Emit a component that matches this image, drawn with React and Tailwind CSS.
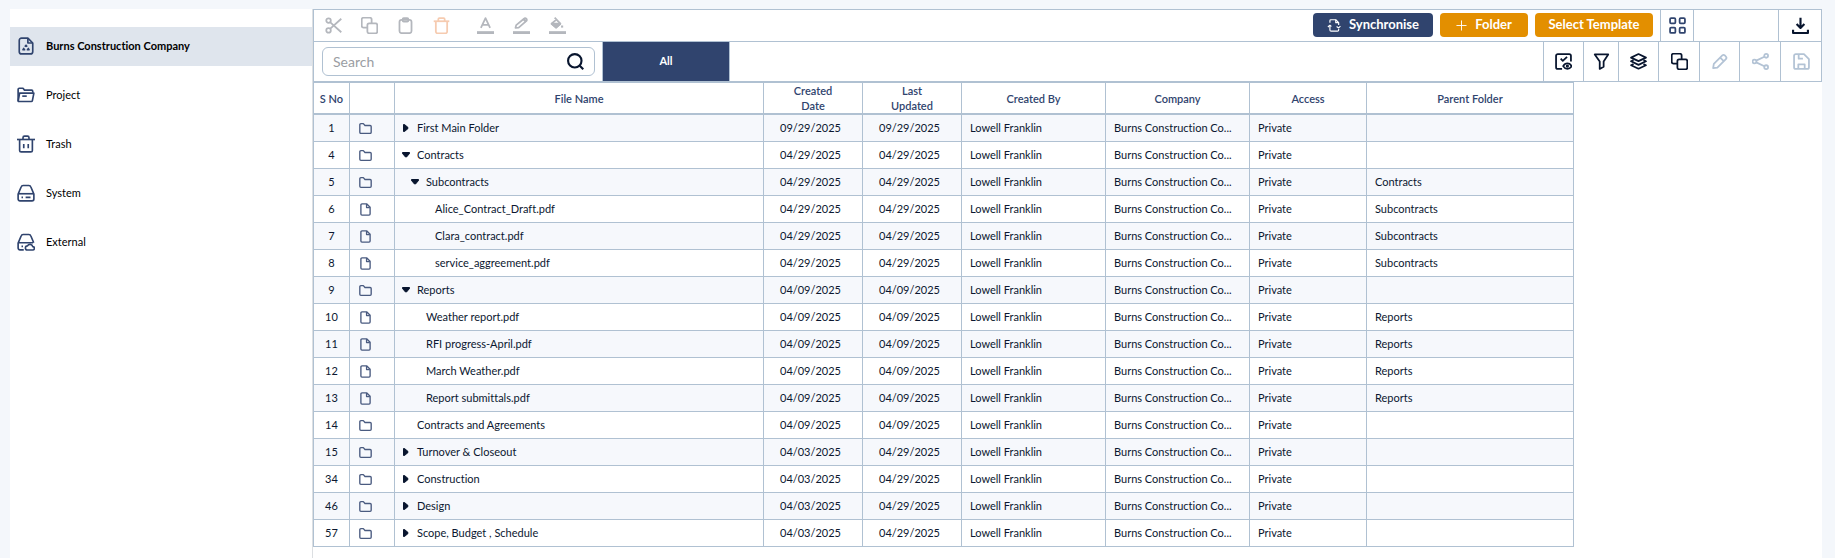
import { useState } from "react";

const rows = [
  { no: 1, type: "folder", name: "First Main Folder", level: 0, toggle: "closed", created: "09/29/2025", updated: "09/29/2025", parent: "" },
  { no: 4, type: "folder", name: "Contracts", level: 0, toggle: "open", created: "04/29/2025", updated: "04/29/2025", parent: "" },
  { no: 5, type: "folder", name: "Subcontracts", level: 1, toggle: "open", created: "04/29/2025", updated: "04/29/2025", parent: "Contracts" },
  { no: 6, type: "file", name: "Alice_Contract_Draft.pdf", level: 2, created: "04/29/2025", updated: "04/29/2025", parent: "Subcontracts" },
  { no: 7, type: "file", name: "Clara_contract.pdf", level: 2, created: "04/29/2025", updated: "04/29/2025", parent: "Subcontracts" },
  { no: 8, type: "file", name: "service_aggreement.pdf", level: 2, created: "04/29/2025", updated: "04/29/2025", parent: "Subcontracts" },
  { no: 9, type: "folder", name: "Reports", level: 0, toggle: "open", created: "04/09/2025", updated: "04/09/2025", parent: "" },
  { no: 10, type: "file", name: "Weather report.pdf", level: 1, created: "04/09/2025", updated: "04/09/2025", parent: "Reports" },
  { no: 11, type: "file", name: "RFI progress-April.pdf", level: 1, created: "04/09/2025", updated: "04/09/2025", parent: "Reports" },
  { no: 12, type: "file", name: "March Weather.pdf", level: 1, created: "04/09/2025", updated: "04/09/2025", parent: "Reports" },
  { no: 13, type: "file", name: "Report submittals.pdf", level: 1, created: "04/09/2025", updated: "04/09/2025", parent: "Reports" },
  { no: 14, type: "folder", name: "Contracts and Agreements", level: 0, created: "04/09/2025", updated: "04/09/2025", parent: "" },
  { no: 15, type: "folder", name: "Turnover & Closeout", level: 0, toggle: "closed", created: "04/03/2025", updated: "04/29/2025", parent: "" },
  { no: 34, type: "folder", name: "Construction", level: 0, toggle: "closed", created: "04/03/2025", updated: "04/29/2025", parent: "" },
  { no: 46, type: "folder", name: "Design", level: 0, toggle: "closed", created: "04/03/2025", updated: "04/29/2025", parent: "" },
  { no: 57, type: "folder", name: "Scope, Budget , Schedule", level: 0, toggle: "closed", created: "04/03/2025", updated: "04/29/2025", parent: "" },
];

const indents = ["pl-0", "pl-[9px]", "pl-[18px]"];

const paths = {
  company: (
    <>
      <path d="M14.500 1.500H6A3 3 0 0 0 3 4.500v15a3 3 0 0 0 3 3h12a3 3 0 0 0 3-3V8z" />
      <path d="M14.500 2v6H21" />
      <path d="M10.500 13l1.500-2 1.500 2M9.500 14.500L8 17h3M14.500 14.500L16 17h-3" />
    </>
  ),
  project: (
    <>
      <path d="M1.500 20V4.500a1.500 1.500 0 0 1 1.500-1.500h5l2 2.500h9.500A1.500 1.500 0 0 1 21 7v2" />
      <path d="M1.500 20.500L3.500 9.500h19l-2 10a1.500 1.500 0 0 1-1.500 1.200z" />
      <path d="M7 13.500h6" />
    </>
  ),
  trash: (
    <>
      <path d="M0 6h24" />
      <path d="M3.500 6v14.500a2 2 0 0 0 2 2h13a2 2 0 0 0 2-2V6" />
      <path d="M8 6V3.500A2 2 0 0 1 10 1.500h4a2 2 0 0 1 2 2V6" />
      <path d="M9 12v5.500M15 12v5.500" />
    </>
  ),
  system: (
    <>
      <path d="M1.500 13.500L5.500 4a3 3 0 0 1 2.700-2h7.600a3 3 0 0 1 2.700 2l4 9.500V20a2.500 2.500 0 0 1-2.500 2.500H4A2.500 2.500 0 0 1 1.500 20z" />
      <path d="M1.500 13h21" />
      <path d="M6 17.800h2M11.500 17.800h6.500" />
    </>
  ),
  external: (
    <>
      <path d="M9 22.500H4A2.500 2.500 0 0 1 1.500 20v-6.500L5.500 4a3 3 0 0 1 2.700-2h7.600a3 3 0 0 1 2.700 2l3.800 9" />
      <path d="M1.500 13h20M6 17.800h2" />
      <path d="M14 22.700a2.800 2.800 0 0 1 0-5.600 3.800 3.800 0 0 1 7 1 2.300 2.300 0 0 1-.2 4.600z" />
    </>
  ),
  cut: (
    <>
      <circle cx="5" cy="5" r="3.200" />
      <circle cx="5" cy="19" r="3.200" />
      <path d="M7.500 7.500L23 21.500M23 2.500L7.500 16.500" />
    </>
  ),
  copy: (
    <>
      <rect x="9" y="9" width="14" height="14" rx="2.500" />
      <path d="M9 15H3.500A2.500 2.500 0 0 1 1 12.500v-9A2.500 2.500 0 0 1 3.500 1h9A2.500 2.500 0 0 1 15 3.500V9" />
    </>
  ),
  paste: (
    <>
      <rect x="3.500" y="4" width="17" height="18.800" rx="3" />
      <rect x="8" y="1.500" width="8" height="5" rx="1.500" />
    </>
  ),
  bin: (
    <>
      <path d="M1 6h22" />
      <path d="M4 6v14.500A2.500 2.500 0 0 0 6.500 23h11a2.500 2.500 0 0 0 2.500-2.500V6" />
      <path d="M7.500 6V3A1.500 1.500 0 0 1 9 1.500h6A1.500 1.500 0 0 1 16.500 3v3" />
    </>
  ),
  textColor: (
    <>
      <path d="M5.500 15.500L12 1.500l6.500 14M8 11h8" />
      <path d="M0 22h24" strokeWidth="4" />
    </>
  ),
  lineColor: (
    <>
      <path d="M3.500 15.500l1-4L15.500 2.500a2.300 2.300 0 0 1 3.500 3L8 15z" />
      <path d="M15 3l3.500 3.500" strokeWidth="3.500" />
      <path d="M0 22h24" strokeWidth="4" />
    </>
  ),
  fillColor: (
    <>
      <path d="M8 1l8 8.500-6 5.500L3.500 9.500 10 4" />
      <path d="M4 9.500h12l-6 5.500z" fill="currentColor" />
      <path d="M18.500 12v3" strokeWidth="3" />
      <path d="M0 22h24" strokeWidth="4" />
    </>
  ),
  sync: (
    <>
      <path d="M5 8V4.500A1.500 1.500 0 0 1 6.500 3H15l5 5v4" />
      <path d="M15 3v5h5" />
      <path d="M20 19v1.500a2 2 0 0 1-2 2H7a2 2 0 0 1-2-2V14" />
      <path d="M1.500 15.500L5 12.500l2.500 2M16.500 14.500l3.500 2.500 3-3" />
    </>
  ),
  plus: <path d="M12 1v22M1 12h22" />,
  grid: (
    <>
      <rect x="1.500" y="1.500" width="7.500" height="7.500" rx="1.500" />
      <rect x="15" y="1.500" width="7.500" height="7.500" rx="1.500" />
      <rect x="1.500" y="15" width="7.500" height="7.500" rx="1.500" />
      <rect x="15" y="15" width="7.500" height="7.500" rx="1.500" />
    </>
  ),
  download: <path d="M12 1v14M6.500 10l5.500 5.500 5.500-5.500M1.500 18v4.500h21V18" />,
  search: (
    <>
      <circle cx="11" cy="11" r="9.500" />
      <path d="M18 18l5 5" />
    </>
  ),
  review: (
    <>
      <path d="M10 22.500H4A2.500 2.500 0 0 1 1.500 20V4A2.500 2.500 0 0 1 4 1.500h16A2.500 2.500 0 0 1 22.500 4v8" />
      <path d="M8 8l3 3 6-5.500" />
      <path d="M11.500 18.500c3-5 9-5 12 0-3 5-9 5-12 0z" />
      <circle cx="17.500" cy="18.500" r="1" />
    </>
  ),
  filter: <path d="M2.500 2h19l-6.500 10v7.500L9.500 22.500V12z" />,
  layers: (
    <>
      <path d="M12 1.500L22.500 6.500l-10.500 5-10.500-5z" />
      <path d="M5 10l-3.500 1.700 10.500 5 10.500-5L19 10" />
      <path d="M5 15.500l-3.500 1.700 10.500 5 10.500-5-3.500-1.700" />
    </>
  ),
  edit: <path d="M3 21.500l1-6L16 3.500a2.500 2.500 0 0 1 3.500 0l1.500 1.500a2.500 2.500 0 0 1 0 3.500L9 20.500zM13 6.500l5 5" />,
  share: (
    <>
      <circle cx="20" cy="4" r="2.700" />
      <circle cx="3.500" cy="12" r="2.700" />
      <circle cx="20" cy="20" r="2.700" />
      <path d="M6 10.800L17.500 5.200M6 13.200l11.500 5.600" />
    </>
  ),
  save: (
    <>
      <path d="M1.500 4A2.500 2.500 0 0 1 4 1.500h11.500l7 7V20a2.500 2.500 0 0 1-2.500 2.500H4A2.500 2.500 0 0 1 1.500 20z" />
      <path d="M8 2v6h6M7.500 22v-6h9v6" />
    </>
  ),
  folder: <path d="M1.500 19V5a2 2 0 0 1 2-2H8l3 3.500h9.500a2 2 0 0 1 2 2V19a2 2 0 0 1-2 2h-17a2 2 0 0 1-2-2z" />,
  file: (
    <>
      <path d="M14 1.500H5.500a2 2 0 0 0-2 2v17a2 2 0 0 0 2 2h13a2 2 0 0 0 2-2V8z" />
      <path d="M14 2v6.500h6" />
    </>
  ),
};

const Icon = ({ name, className = "size-[17px]", stroke = 2.5 }) => (
  <svg
    viewBox="0 0 24 24"
    fill="none"
    stroke="currentColor"
    strokeWidth={stroke}
    strokeLinejoin="round"
    className={`shrink-0 ${className}`}
    aria-hidden="true"
  >
    {paths[name]}
  </svg>
);

const menu = [
  { label: "Burns Construction Company", icon: "company" },
  { label: "Project", icon: "project" },
  { label: "Trash", icon: "trash" },
  { label: "System", icon: "system" },
  { label: "External", icon: "external" },
];

const columns = [
  { label: "S No", width: "w-[36px]" },
  { label: "", width: "w-[45px]" },
  { label: "File Name", width: "w-[369px]" },
  { label: "Created Date", width: "w-[99px]" },
  { label: "Last Updated", width: "w-[99px]" },
  { label: "Created By", width: "w-[144px]" },
  { label: "Company", width: "w-[144px]" },
  { label: "Access", width: "w-[117px]" },
  { label: "Parent Folder", width: "w-[207px]" },
];

const actions = [
  { label: "Review", icon: "review", width: "w-[40px]" },
  { label: "Filter", icon: "filter", width: "w-[35px]" },
  { label: "Layers", icon: "layers", width: "w-[40px]" },
  { label: "Duplicate", icon: "copy", width: "w-[41px]" },
  { label: "Edit", icon: "edit", width: "w-[40px]", disabled: true },
  { label: "Share", icon: "share", width: "w-[41px]", disabled: true },
  { label: "Save", icon: "save", width: "w-[41px]", disabled: true },
];

function Sidebar() {
  return (
    <nav className="w-[303px] shrink-0 pt-[18px] bg-white border-r border-[#dcdfe2]">
      <ul className="flex flex-col gap-[10px]">
        {menu.map((item, index) => (
          <li key={item.label}>
            <a
              href="#"
              className={`h-[39px] pl-[7px] pb-px flex items-center gap-[11px] text-[11px] text-black ${
                index === 0 ? "bg-[#dfe5ed] font-bold" : ""
              }`}
            >
              <Icon name={item.icon} className="size-[18px] text-[#30446e]" stroke={2.2} />
              <span>{item.label}</span>
            </a>
          </li>
        ))}
      </ul>
    </nav>
  );
}

function Toolbar() {
  return (
    <div className="h-[33px] flex items-stretch border border-[#b0c1d2]">
      <div className="flex items-center gap-[19px] pl-[11px] text-[#b4b7bd]">
        <button aria-label="Cut"><Icon name="cut" /></button>
        <button aria-label="Copy"><Icon name="copy" /></button>
        <button aria-label="Paste"><Icon name="paste" /></button>
        <button aria-label="Delete" className="text-[#f6cbb0]"><Icon name="bin" /></button>
        <button aria-label="Text colour" className="ml-2"><Icon name="textColor" /></button>
        <button aria-label="Line colour"><Icon name="lineColor" /></button>
        <button aria-label="Fill colour"><Icon name="fillColor" /></button>
      </div>
      <div className="ml-auto pr-[7px] pb-px flex items-center gap-[7px] text-[13px] font-bold text-white">
        <button className="w-[120px] h-6 flex items-center justify-center gap-2 bg-[#30446e] rounded-sm">
          <Icon name="sync" className="size-[14px]" stroke={2} />
          Synchronise
        </button>
        <button className="w-[88px] h-6 flex items-center justify-center gap-2 bg-[#e38f00] rounded-sm">
          <Icon name="plus" className="size-[11px]" stroke={2} />
          Folder
        </button>
        <button className="w-[118px] h-6 bg-[#e38f00] rounded-sm">Select Template</button>
      </div>
      <button aria-label="Grid view" className="w-[33px] flex items-center justify-center border-l border-[#b0c1d2] text-[#30446e]">
        <Icon name="grid" />
      </button>
      <div className="w-[85px] border-l border-[#b0c1d2]" />
      <button aria-label="Download" className="w-[43px] flex items-center justify-center border-l border-[#b0c1d2] text-[#08152e]">
        <Icon name="download" stroke={3} />
      </button>
    </div>
  );
}

function FilterBar() {
  const [search, setSearch] = useState("");

  return (
    <div className="h-10 flex items-stretch border-x border-b border-[#b0c1d2]">
      <label className="w-[273px] h-[29px] ml-2 mr-[7px] my-[5px] px-[10px] flex items-center border border-[#b0c1d2] rounded-md">
        <input
          type="text"
          aria-label="Search"
          placeholder="Search"
          value={search}
          onChange={(e) => setSearch(e.target.value)}
          className="w-full text-sm outline-none placeholder:text-[#9a9da3]"
        />
        <Icon name="search" className="size-[17px] text-[#08152e]" stroke={3} />
      </label>
      <button className="w-[128px] bg-[#30446e] border-x border-[#b0c1d2] text-[11px] font-bold text-white">All</button>
      <div className="ml-auto flex items-stretch">
        {actions.map((action) => (
          <button
            key={action.label}
            aria-label={action.label}
            disabled={action.disabled}
            className={`flex items-center justify-center border-l border-[#b0c1d2] ${action.width} ${
              action.disabled ? "text-[#b3c3d5]" : "text-[#08152e]"
            }`}
          >
            <Icon name={action.icon} />
          </button>
        ))}
      </div>
    </div>
  );
}

function Toggle({ state }) {
  if (!state) return <span className="w-[8px] shrink-0" />;

  return (
    <button aria-label={state === "open" ? "Collapse" : "Expand"} className="w-[8px] shrink-0">
      <svg viewBox="0 0 8 8" className="size-2" fill="#08152e" stroke="#08152e" strokeLinejoin="round">
        {state === "open" ? <path d="M.5 1.500h7v1L4.500 6h-1L.5 2.500z" /> : <path d="M1.500 .5h1L6 3.500v1L2.500 7.500h-1z" />}
      </svg>
    </button>
  );
}

function FileTable() {
  return (
    <table className="w-[1261px] table-fixed border-separate border-spacing-0 border-l border-t border-[#b0c1d2] text-[11px] text-[#0b1730]">
      <thead>
        <tr className="h-8">
          {columns.map((column, index) => (
            <th
              key={index}
              className={`p-0 px-1 border-r border-b-2 border-[#b0c1d2] font-semibold leading-[15px] text-[#30446e] ${column.width}`}
            >
              <span className={column.width === "w-[99px]" ? "block mx-auto w-12" : ""}>{column.label}</span>
            </th>
          ))}
        </tr>
      </thead>
      <tbody>
        {rows.map((row) => (
          <tr
            key={row.no}
            className="h-[27px] odd:bg-[#f6f8fc] *:p-0 *:border-r *:border-b *:border-[#b0c1d2]"
          >
            <td className="text-center">{row.no}</td>
            <td>
              <Icon name={row.type} className="size-[13px] ml-[9px] text-[#4a5b80]" />
            </td>
            <td>
              <div className={`ml-[7px] flex items-center gap-[7px] ${indents[row.level]}`}>
                <Toggle state={row.toggle} />
                <span>{row.name}</span>
              </div>
            </td>
            <td><span className="ml-4">{row.created}</span></td>
            <td><span className="ml-4">{row.updated}</span></td>
            <td><span className="ml-2">Lowell Franklin</span></td>
            <td><span className="ml-2">Burns Construction Co...</span></td>
            <td><span className="ml-2">Private</span></td>
            <td><span className="ml-2">{row.parent}</span></td>
          </tr>
        ))}
      </tbody>
    </table>
  );
}

export default function App() {
  return (
    <div className="min-h-screen pt-[9px] pl-[10px] pr-[13px] flex bg-[#f4f7fb] font-['Lato',sans-serif] [font-variant-ligatures:none]">
      <Sidebar />
      <main className="flex-1 min-w-0 bg-white">
        <Toolbar />
        <FilterBar />
        <FileTable />
      </main>
    </div>
  );
}
